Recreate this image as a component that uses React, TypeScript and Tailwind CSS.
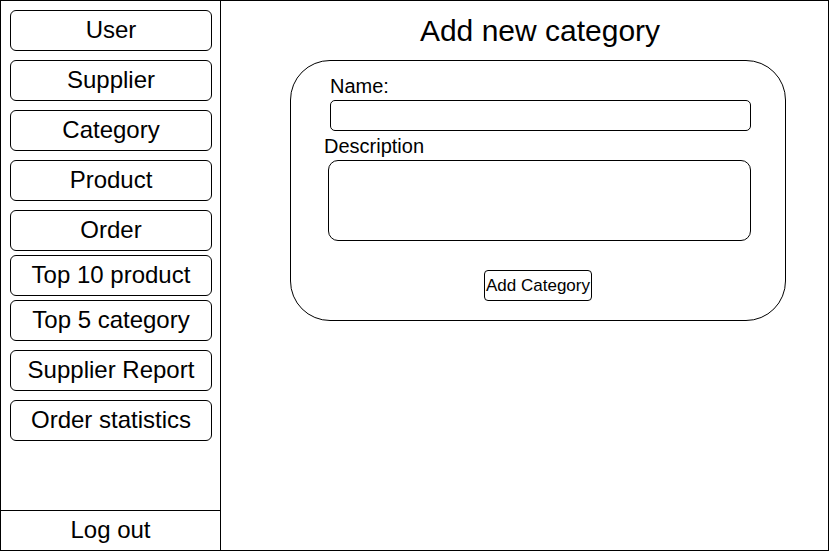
import React from "react";

const navItems: { label: string; mt: string }[] = [
  { label: "User", mt: "mt-[9px]" },
  { label: "Supplier", mt: "mt-[9px]" },
  { label: "Category", mt: "mt-[9px]" },
  { label: "Product", mt: "mt-[9px]" },
  { label: "Order", mt: "mt-[9px]" },
  { label: "Top 10 product", mt: "mt-[4px]" },
  { label: "Top 5 category", mt: "mt-[4px]" },
  { label: "Supplier Report", mt: "mt-[9px]" },
  { label: "Order statistics", mt: "mt-[9px]" },
];

export default function App() {
  return (
    <div
      className="w-[829px] h-[551px] border border-black flex bg-white text-black"
      style={{ fontFamily: '"Liberation Sans", Arial, sans-serif' }}
    >
      <aside className="w-[220px] h-full border-r border-black flex flex-col pt-[9px]">
        {navItems.map((item, i) => (
          <button
            key={item.label}
            className={`${i === 0 ? "" : item.mt} ml-[9px] w-[202px] h-[41px] pb-[2px] border border-black rounded-[6px] flex items-center justify-center text-[24px] leading-none`}
          >
            {item.label}
          </button>
        ))}
        <div className="mt-auto h-[40px] pb-[2px] border-t border-black flex items-center justify-center text-[24px] leading-none">
          Log out
        </div>
      </aside>
      <main className="flex-1 flex flex-col">
        <div className="ml-[69px] w-[496px] flex flex-col">
          <h1 className="pt-[12px] pl-[4px] text-center text-[30px] leading-[36px]">
            Add new category
          </h1>
          <div className="mt-[11px] h-[261px] border border-black rounded-[40px] flex flex-col pt-[13px]">
            <label className="ml-[39px] text-[20px] leading-[24px]">Name:</label>
            <div className="mt-[2px] ml-[39px] w-[421px] h-[31px] border border-black rounded-[5px]" />
            <label className="mt-[3px] ml-[33px] text-[20px] leading-[24px]">Description</label>
            <div className="mt-[2px] ml-[37px] w-[423px] h-[81px] border border-black rounded-[10px]" />
            <button className="mt-[29px] mx-auto w-[108px] h-[31px] border border-black rounded-[4px] flex items-center justify-center text-[17px] leading-none">
              Add Category
            </button>
          </div>
        </div>
      </main>
    </div>
  );
}
